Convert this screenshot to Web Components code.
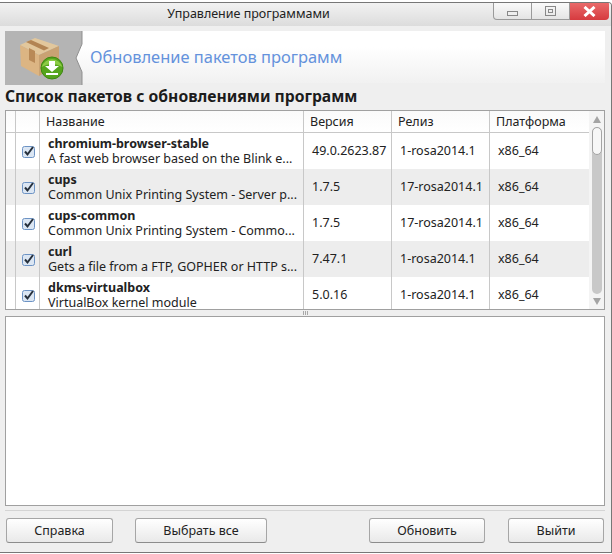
<!DOCTYPE html>
<html>
<head>
<meta charset="utf-8">
<title>Управление программами</title>
<style>
  html, body { margin: 0; padding: 0; background: #fff; }
  body { width: 612px; height: 554px; overflow: hidden; font: 13px "Noto Sans", "Open Sans", sans-serif; color: #222; }
</style>
</head>
<body>
<app-window>
  <title-bar slot="title">Управление программами</title-bar>
  <app-banner>Обновление пакетов программ</app-banner>
  <section-heading>Список пакетов с обновлениями программ</section-heading>
  <pkg-table>
    <pkg-row name="chromium-browser-stable" desc="A fast web browser based on the Blink e..." version="49.0.2623.87" release="1-rosa2014.1" arch="x86_64"></pkg-row>
    <pkg-row alt name="cups" desc="Common Unix Printing System - Server p..." version="1.7.5" release="17-rosa2014.1" arch="x86_64"></pkg-row>
    <pkg-row name="cups-common" desc="Common Unix Printing System - Commo..." version="1.7.5" release="17-rosa2014.1" arch="x86_64"></pkg-row>
    <pkg-row alt name="curl" desc="Gets a file from a FTP, GOPHER or HTTP s..." version="7.47.1" release="1-rosa2014.1" arch="x86_64"></pkg-row>
    <pkg-row name="dkms-virtualbox" desc="VirtualBox kernel module" version="5.0.16" release="1-rosa2014.1" arch="x86_64"></pkg-row>
  </pkg-table>
  <split-handle></split-handle>
  <details-box></details-box>
  <button-bar>
    <push-button style="width:107px;margin-right:22px">Справка</push-button>
    <push-button style="width:132px;margin-right:102px">Выбрать все</push-button>
    <push-button style="width:116px;margin-right:23px">Обновить</push-button>
    <push-button style="width:96px">Выйти</push-button>
  </button-bar>
</app-window>

<script>
class AppWindow extends HTMLElement {
  constructor() {
    super();
    this.attachShadow({ mode: "open" });
    this.shadowRoot.innerHTML = `
      <style>
        :host {
          display: flex;
          flex-direction: column;
          box-sizing: border-box;
          width: 612px;
          height: 551px;
          margin-top: 2px;
          border: 1px solid #777;
          border-width: 1px 1px 1px 0;
          border-radius: 0 4px 0 0;
          background: #efefef;
          overflow: hidden;
        }
        .body { display: flex; flex-direction: column; flex: 1; padding: 5px 6px 0 5px; min-height: 0; }
      </style>
      <slot name="title"></slot>
      <div class="body">
        <slot></slot>
      </div>
    `;
  }
}

class TitleBar extends HTMLElement {
  constructor() {
    super();
    this.attachShadow({ mode: "open" });
    this.shadowRoot.innerHTML = `
      <style>
        :host {
          display: flex;
          align-items: flex-start;
          height: 23px;
          background: linear-gradient(#f2f2f2, #dcdcdc);
          color: #222;
        }
        .label { flex: 1; text-align: center; line-height: 22px; padding-left: 4px; white-space: nowrap; font-size: 12.5px; }
        .btns { display: flex; height: 17px; margin-right: 2px; }
        .b {
          box-sizing: border-box;
          height: 17px;
          display: flex; align-items: center; justify-content: center;
          border: 1px solid #9a9a9a;
          border-top: 0;
          background: linear-gradient(#fafafa, #e4e4e4);
        }
        .min { width: 39px; border-radius: 0 0 0 4px; }
        .max { width: 38px; border-left: 0; }
        .close { width: 39px; border: 0; border-radius: 0 0 4px 0; background: linear-gradient(#e96a6a, #d63a3f); }
      </style>
      <div class="label"><slot></slot></div>
      <div class="btns">
        <div class="b min"><svg width="11" height="6" viewBox="0 0 11 6" style="margin-top:5px"><rect x=".5" y=".5" width="10" height="4" fill="#eee" stroke="#888"/></svg></div>
        <div class="b max"><svg width="11" height="10" viewBox="0 0 11 10"><rect x=".5" y=".5" width="10" height="9" fill="none" stroke="#888"/><rect x="3.5" y="3.5" width="4" height="3" fill="none" stroke="#888"/></svg></div>
        <div class="b close"><svg width="13" height="11" viewBox="0 0 13 11"><path d="M1.5 1 L11.5 10 M11.5 1 L1.5 10" stroke="#fff" stroke-width="3"/></svg></div>
      </div>
    `;
  }
}

class AppBanner extends HTMLElement {
  constructor() {
    super();
    this.attachShadow({ mode: "open" });
    this.shadowRoot.innerHTML = `
      <style>
        :host {
          display: flex;
          align-items: flex-start;
          height: 52px;
          flex: none;
          background: linear-gradient(#fff 30%, #f1f1f1);
        }
        .logo { width: 78px; height: 54px; flex: none; }
        .text { margin-left: 7px; font-size: 16.45px; line-height: 52px; color: #6492dc; white-space: nowrap; }
      </style>
      <svg class="logo" viewBox="0 0 78 54" width="78" height="54">
        <path d="M0 0H77V13L71 27L77 41V54H0Z" fill="#b4b4b4"/>
        <path d="M77 0V13L71 27L77 41V54" fill="none" stroke="#8f8f8f" stroke-width="1"/>
        <path d="M15 14L30 7L54 15L34 24Z" fill="#e2c79c"/>
        <path d="M15 14L34 24V45L16 35Z" fill="#dcb583"/>
        <path d="M34 24L54 15V34L34 45Z" fill="#c9a273"/>
        <path d="M21 11L26 9L44 17L39 19.5Z" fill="#b28453"/>
        <path d="M24 17L30 20V32L24 29Z" fill="#b98a57"/>
        <circle cx="47" cy="37" r="11" fill="#55a51c" stroke="#3f8712"/>
        <path d="M36.5 36A11 11 0 0 1 57.5 36Q47 30 36.5 36Z" fill="#8ccb45"/>
        <path d="M44 30H50V35H54L47 41L40 35H44Z M41 42H53V44H41Z" fill="#fff"/>
      </svg>
      <div class="text"><slot></slot></div>
    `;
  }
}

class SectionHeading extends HTMLElement {
  constructor() {
    super();
    this.attachShadow({ mode: "open" });
    this.shadowRoot.innerHTML = `
      <style>
        :host { display: block; height: 27px; line-height: 27px; font-size: 15.7px; font-weight: 700; color: #1c1c1c; white-space: nowrap; flex: none; }
      </style>
      <slot></slot>
    `;
  }
}

class PkgTable extends HTMLElement {
  constructor() {
    super();
    this.attachShadow({ mode: "open" });
    this.shadowRoot.innerHTML = `
      <style>
        :host {
          display: flex;
          box-sizing: border-box;
          height: 200px;
          border: 1px solid #a0a0a0;
          background: #fff;
          flex: none;
        }
        .main { width: 583px; flex: none; overflow: hidden; }
        .head {
          display: grid;
          grid-template-columns: 10px 24px 264px 88px 98px 1fr;
          height: 22px;
          box-sizing: border-box;
          border-bottom: 1px solid #c8c8c8;
          background: linear-gradient(#fafafa, #fff);
          line-height: 22px;
          font-size: 12.5px;
        }
        .head div { border-right: 1px solid #c8c8c8; padding-left: 6px; white-space: nowrap; overflow: hidden; }
        .head div:last-child { border-right: 0; }
        .head div:nth-child(1), .head div:nth-child(2) { padding: 0; }
        .rows { height: 176px; overflow: hidden; }
        .scroll { flex: 1; background: #f4f4f4; display: flex; flex-direction: column; align-items: center; }
        .arrow { height: 15px; flex: none; display: flex; align-items: center; justify-content: center; }
        .arrow.up { height: 16px; }
        .track { width: 10px; flex: 1; background: #c8c8c8; border-radius: 5px; }
        .thumb { box-sizing: border-box; height: 28px; border: 1px solid #a4a4a4; border-radius: 5px; background: #f7f7f7; }
      </style>
      <div class="main">
        <div class="head"><div></div><div></div><div>Название</div><div>Версия</div><div>Релиз</div><div>Платформа</div></div>
        <div class="rows"><slot></slot></div>
      </div>
      <div class="scroll">
        <div class="arrow up"><svg width="8" height="7"><path d="M4 0L8 7H0Z" fill="#a4a4a4"/></svg></div>
        <div class="track"><div class="thumb"></div></div>
        <div class="arrow"><svg width="8" height="7"><path d="M0 0H8L4 7Z" fill="#a4a4a4"/></svg></div>
      </div>
    `;
  }
}

class PkgRow extends HTMLElement {
  constructor() {
    super();
    this.attachShadow({ mode: "open" });
    const get = (n) => this.getAttribute(n);
    this.shadowRoot.innerHTML = `
      <style>
        :host {
          display: grid;
          grid-template-columns: 10px 24px 264px 88px 98px 1fr;
          height: 36px;
          background: #fff;
          font-size: 12.5px;
          color: #222;
          white-space: nowrap;
        }
        :host([alt]) { background: #ededed; }
        .c { border-right: 1px solid #c8c8c8; overflow: hidden; display: flex; align-items: center; padding-left: 8px; padding-bottom: 1px; }
        .c:last-child { border-right: 0; }
        .lead { padding: 0; }
        .check { padding: 0 0 0 6px; }
        .name { display: block; padding-bottom: 0; padding-top: 3px; }
        .name b { display: block; font-weight: 700; line-height: 15px; }
        .name span { display: block; line-height: 15px; }
      </style>
      <div class="c lead"></div>
      <div class="c check">
        <svg width="14" height="13" viewBox="0 0 14 13">
          <rect x=".5" y="1.5" width="12" height="11" rx="2" fill="#dbe6f3" stroke="#6d93c4"/>
          <path d="M3 6.5L5.5 9.5L11 2" fill="none" stroke="#26303c" stroke-width="2"/>
        </svg>
      </div>
      <div class="c name"><b>${get("name")}</b><span>${get("desc")}</span></div>
      <div class="c">${get("version")}</div>
      <div class="c">${get("release")}</div>
      <div class="c">${get("arch")}</div>
    `;
  }
}

class SplitHandle extends HTMLElement {
  constructor() {
    super();
    this.attachShadow({ mode: "open" });
    this.shadowRoot.innerHTML = `
      <style>
        :host { display: flex; height: 6px; justify-content: center; align-items: center; gap: 1px; flex: none; }
        i { width: 1px; height: 4px; background: #a8a8a8; }
      </style>
      <i></i><i></i><i></i>
    `;
  }
}

class DetailsBox extends HTMLElement {
  constructor() {
    super();
    this.attachShadow({ mode: "open" });
    this.shadowRoot.innerHTML = `
      <style>
        :host { display: block; box-sizing: border-box; height: 190px; flex: none; border: 1px solid #a0a0a0; background: #fff; }
      </style>
      <slot></slot>
    `;
  }
}

class ButtonBar extends HTMLElement {
  constructor() {
    super();
    this.attachShadow({ mode: "open" });
    this.shadowRoot.innerHTML = `
      <style>
        :host { display: flex; flex: none; margin-top: 4px; padding: 7px 0 0 1px; border-top: 1px solid #d4d4d4; }
      </style>
      <slot></slot>
    `;
  }
}

class PushButton extends HTMLElement {
  constructor() {
    super();
    this.attachShadow({ mode: "open" });
    this.shadowRoot.innerHTML = `
      <style>
        :host {
          display: flex;
          align-items: center;
          justify-content: center;
          box-sizing: border-box;
          height: 25px;
          flex: none;
          border: 1px solid #a6a6a6;
          border-bottom-color: #8c8c8c;
          border-radius: 3px;
          background: linear-gradient(#fff, #e9e9e9);
          font-size: 12.5px;
          color: #222;
        }
      </style>
      <slot></slot>
    `;
  }
}

customElements.define("app-window", AppWindow);
customElements.define("title-bar", TitleBar);
customElements.define("app-banner", AppBanner);
customElements.define("section-heading", SectionHeading);
customElements.define("pkg-table", PkgTable);
customElements.define("pkg-row", PkgRow);
customElements.define("split-handle", SplitHandle);
customElements.define("details-box", DetailsBox);
customElements.define("button-bar", ButtonBar);
customElements.define("push-button", PushButton);
</script>
</body>
</html>
